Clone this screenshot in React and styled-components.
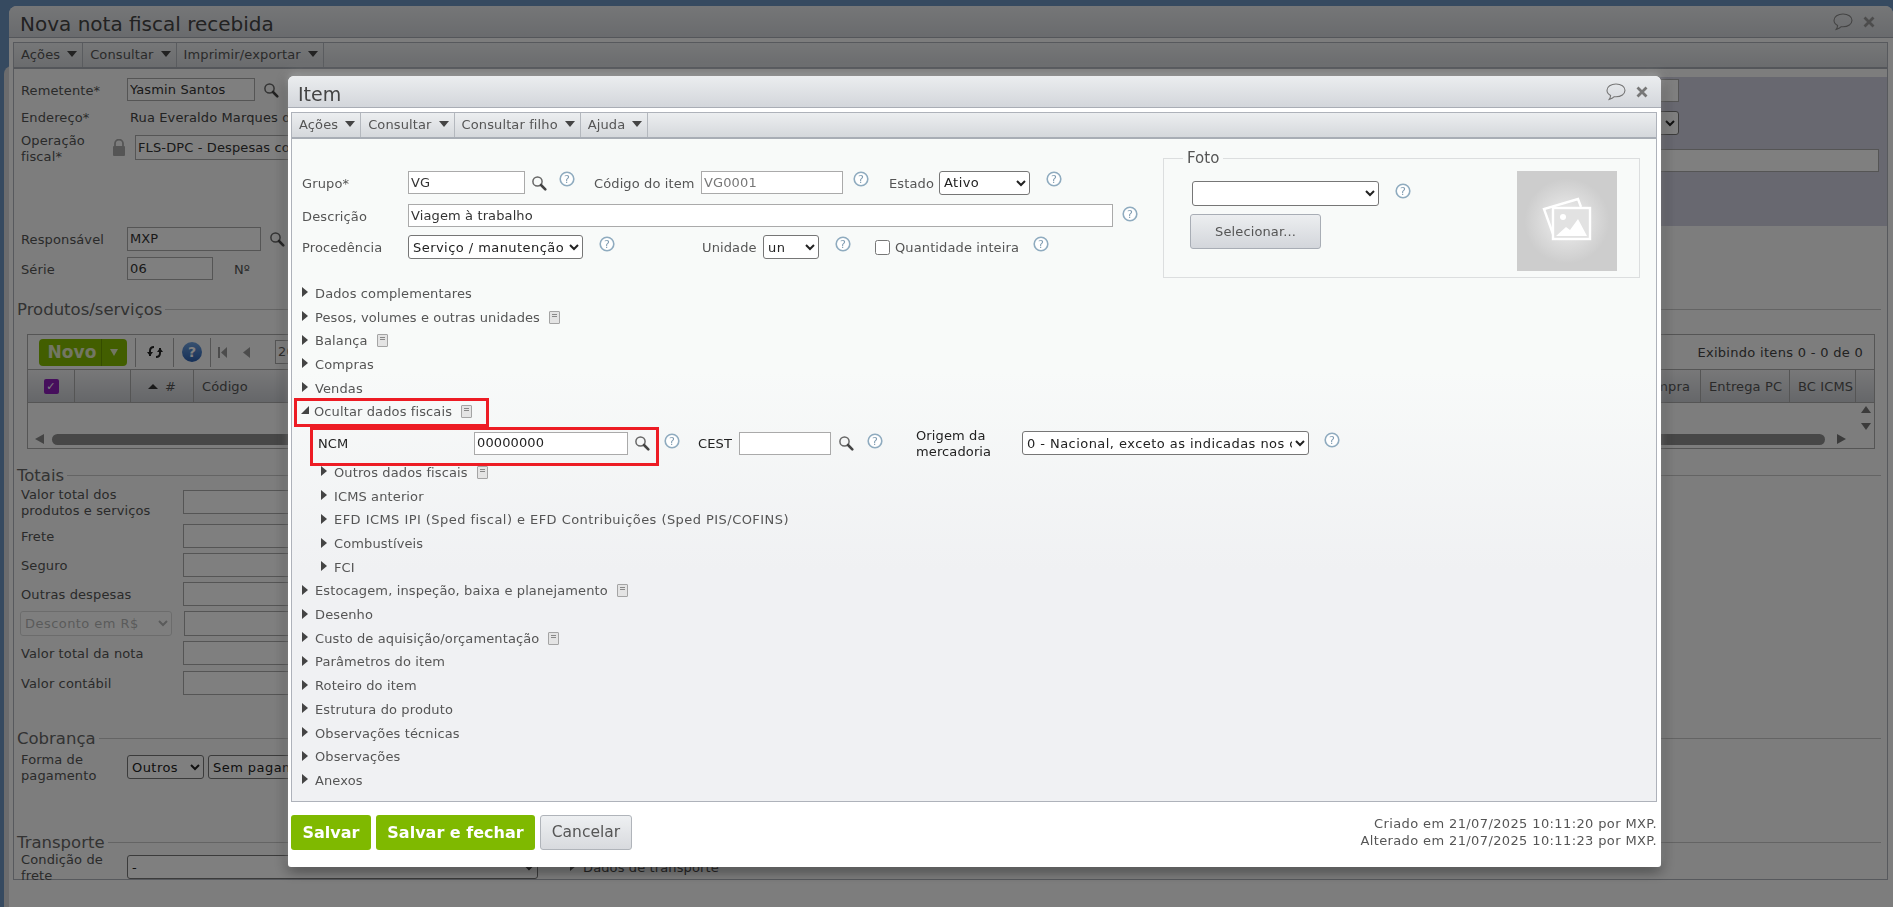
import React from 'react';
import styled, { createGlobalStyle } from 'styled-components';

const GlobalStyle = createGlobalStyle`
	html, body {
		margin: 0;
		height: 100%;
		overflow: hidden;
		background: #6c94c0;
		font-family: "DejaVu Sans", Verdana, sans-serif;
		font-size: 13px;
		letter-spacing: 0.12px;
		color: #444;
	}
	* {
		box-sizing: border-box;
	}
`;

// background window
const Win = styled.div`
	margin: 6px 0 0 9px;
	height: 901px;
	border-radius: 8px 8px 0 0;
	background: #fafbfb;
	box-shadow: -5px 60px 0 #d8d9da;
	overflow: hidden;
`;

const TitleBar = styled.div`
	height: 32px;
	display: flex;
	align-items: center;
	justify-content: space-between;
	padding: 0 ${(p) => p.$pr}px 0 ${(p) => p.$pl}px;
	background: linear-gradient(#ebedef, #d3d6db);
	border-bottom: 1px solid #a9adb5;
`;

const Title = styled.div`
	padding-top: 4px;
	font-size: ${(p) => p.$size}px;
	letter-spacing: 0;
	color: #444;
`;

const TitleIcons = styled.div`
	display: flex;
	align-items: center;
	gap: 10px;
`;

const Panel = styled.div`
	margin: 4px ${(p) => p.$mr}px 0 ${(p) => p.$ml}px;
	border: 1px solid #aeb2ba;
	background: #fafbfb;
`;

const Toolbar = styled.div`
	height: 26px;
	display: flex;
	background: linear-gradient(#eceef0, #d5d8dc);
	border-bottom: 2px solid #a8adb5;
`;

const MenuItem = styled.div`
	height: 100%;
	display: flex;
	align-items: center;
	gap: 7px;
	padding: 0 5px 0 7px;
	border-right: 1px solid #b4b8be;
	color: #555;
	line-height: 24px;
`;

const MenuCaret = styled.span`
	width: 0;
	height: 0;
	margin-top: -3px;
	border-left: 5px solid transparent;
	border-right: 5px solid transparent;
	border-top: 6px solid #444;
`;

const TopForm = styled.div`
	display: flex;
	align-items: flex-start;
`;

const LeftCol = styled.div`
	flex: 1;
	padding: 9px 0 0 7px;
`;

const TintCol = styled.div`
	width: 887px;
	height: 149px;
	margin-top: 8px;
	padding-top: 2px;
	background: #d0d0e0;
	display: flex;
	flex-direction: column;
	align-items: flex-end;
`;

const Row = styled.div`
	display: flex;
	align-items: center;
	height: ${(p) => p.$h || 23}px;
	margin-top: ${(p) => p.$mt || 0}px;
`;

const Label = styled.div`
	flex: none;
	width: ${(p) => p.$w}px;
	margin-left: ${(p) => p.$ml || 0}px;
	padding-top: 2px;
	line-height: 16px;
	color: ${(p) => p.$color || '#555'};
`;

const Input = styled.input`
	flex: none;
	width: ${(p) => p.$w}px;
	height: 100%;
	margin: 0 ${(p) => p.$mr || 0}px 0 ${(p) => p.$ml || 0}px;
	padding: 0 2px 1px;
	border: 1px solid #aaa;
	border-radius: 0;
	outline: none;
	background: ${(p) => p.$bg || '#fff'};
	font: 13px "DejaVu Sans", Verdana, sans-serif;
	letter-spacing: 0.12px;
	color: ${(p) => p.$color || '#333'};
`;

const Select = styled.select`
	flex: none;
	width: ${(p) => p.$w}px;
	height: ${(p) => p.$h || 24}px;
	margin: 0 ${(p) => p.$mr || 0}px 0 ${(p) => p.$ml || 0}px;
	background: #fff;
	border: 1px solid ${(p) => (p.disabled ? '#ccc' : '#767676')};
	border-radius: 3px;
	font: 13px "DejaVu Sans", Verdana, sans-serif;
	letter-spacing: 0.45px;
	color: ${(p) => (p.disabled ? '#999' : '#222')};
`;

const SectionHead = styled.div`
	display: flex;
	align-items: center;
	gap: 3px;
	height: 22px;
	margin: ${(p) => p.$mt}px 6px 0 3px;
	font-size: 16.5px;
	letter-spacing: 0;
	color: #666;
	&::after {
		content: '';
		flex: 1;
		height: 1px;
		background: #c8c8c8;
	}
`;

const Indent = styled.div`
	padding-left: 7px;
	margin-top: ${(p) => p.$mt || 0}px;
`;

const Grid = styled.div`
	height: 115px;
	margin: 14px 12px 0 13px;
	border: 1px solid #aaa;
	background: #fafbfb;
`;

const GridBar = styled.div`
	height: 35px;
	display: flex;
	align-items: center;
	padding-left: 11px;
	border-bottom: 1px solid #aaa;
`;

const NovoButton = styled.div`
	width: 88px;
	height: 27px;
	display: flex;
	border-radius: 4px;
	background: #84bd00;
	color: #e4ecc8;
	font-weight: bold;
	font-size: 17px;
`;

const NovoText = styled.div`
	width: 63px;
	padding-left: 4px;
	line-height: 27px;
	text-align: center;
	border-right: 1px solid #6b9a00;
`;

const NovoCaret = styled.span`
	width: 0;
	height: 0;
	margin: 10px 0 0 8px;
	border-left: 4px solid transparent;
	border-right: 4px solid transparent;
	border-top: 7px solid #e4ecc8;
`;

const BarSep = styled.span`
	width: 1px;
	height: 29px;
	margin: 0 ${(p) => p.$mr || 0}px 0 ${(p) => p.$ml || 0}px;
	background: #aaa;
`;

const PageBox = styled.div`
	width: 60px;
	height: 24px;
	margin-left: 25px;
	padding: 3px 2px;
	border: 1px solid #aaa;
	background: #fff;
	color: #555;
`;

const Showing = styled.div`
	margin-left: auto;
	padding-right: 11px;
	letter-spacing: 0.3px;
	color: #444;
`;

const GridHead = styled.div`
	height: 33px;
	display: flex;
	background: linear-gradient(#f0f0f2, #cbced3);
	border-bottom: 1px solid #aaa;
`;

const HeadCell = styled.div`
	display: flex;
	align-items: center;
	justify-content: ${(p) => (p.$center ? 'center' : 'flex-start')};
	flex: ${(p) => (p.$w ? 'none' : 1)};
	width: ${(p) => p.$w}px;
	padding-left: ${(p) => (p.$center ? 0 : 8)}px;
	border-right: ${(p) => (p.$flat ? 'none' : '1px solid #aaa')};
	color: #555;
	white-space: nowrap;
	overflow: hidden;
`;

const CheckBox = styled.span`
	width: 15px;
	height: 15px;
	border-radius: 2px;
	background: #8c1fb8;
	color: #fff;
	font-size: 11px;
	line-height: 15px;
	text-align: center;
	font-weight: bold;
`;

const SortCaret = styled.span`
	width: 0;
	height: 0;
	margin-right: 7px;
	border-left: 5px solid transparent;
	border-right: 5px solid transparent;
	border-bottom: 5px solid #333;
`;

const GridBody = styled.div`
	height: 45px;
	display: flex;
	align-items: flex-end;
	padding: 0 0 3px 7px;
`;

const ScrollThumb = styled.div`
	flex: 1;
	height: 11px;
	margin: 0 12px 0 8px;
	border-radius: 6px;
	background: #8e8e8e;
`;

const ScrollArrows = styled.div`
	width: 28px;
	height: 100%;
	display: flex;
	flex-direction: column;
	align-items: flex-end;
	justify-content: space-between;
	padding: 3px 3px 0 0;
`;

const Triangle = styled.span`
	width: 0;
	height: 0;
	margin: ${(p) => p.$m || 0};
	${(p) => (p.$dir === 'left' ? `border-top: 5px solid transparent; border-bottom: 5px solid transparent; border-right: 9px solid ${p.$c};` : '')}
	${(p) => (p.$dir === 'right' ? `border-top: 5px solid transparent; border-bottom: 5px solid transparent; border-left: 9px solid ${p.$c};` : '')}
	${(p) => (p.$dir === 'up' ? `border-left: 5px solid transparent; border-right: 5px solid transparent; border-bottom: 7px solid ${p.$c};` : '')}
	${(p) => (p.$dir === 'down' ? `border-left: 5px solid transparent; border-right: 5px solid transparent; border-top: 7px solid ${p.$c};` : '')}
`;

const Overlay = styled.div`
	position: fixed;
	inset: 0;
	background: rgba(0, 0, 0, 0.5);
`;

const Modal = styled.div`
	position: absolute;
	left: 288px;
	top: 76px;
	width: 1373px;
	height: 791px;
	background: #fff;
	border-radius: 6px 6px 3px 3px;
	box-shadow: 0 -3px 8px rgba(255, 255, 255, 0.35), 0 3px 14px rgba(0, 0, 0, 0.55);
	overflow: hidden;
	color: #555;
`;

const Body = styled.div`
	height: 662px;
	background: linear-gradient(#f8faf9 0%, #f8faf9 35%, #f0f1f3 65%);
`;

const ItemTop = styled.div`
	display: flex;
	align-items: flex-start;
`;

const ItemFields = styled.div`
	width: 871px;
	padding: 32px 0 0 10px;
`;

const ItemHelp = styled.span`
	flex: none;
	width: 16px;
	height: 16px;
	margin-left: ${(p) => p.$ml}px;
	align-self: flex-start;
	margin-top: ${(p) => p.$mt || 0}px;
	display: flex;
`;

const SearchWrap = styled.span`
	flex: none;
	display: flex;
	margin-left: ${(p) => p.$ml}px;
`;

const CheckInput = styled.input`
	flex: none;
	width: 15px;
	height: 15px;
	margin: 0 5px 0 ${(p) => p.$ml}px;
`;

const CheckLabel = styled(Label)`
	white-space: nowrap;
`;

const Fieldset = styled.fieldset`
	width: 477px;
	height: 126px;
	margin: 13px 0 0 0;
	padding: 0;
	border: 1px solid #dcdedf;
	display: flex;
`;

const Legend = styled.legend`
	margin-left: 19px;
	padding: 0 4px;
	font-size: 15px;
	letter-spacing: 0;
	line-height: 12px;
	color: #555;
`;

const FotoLeft = styled.div`
	padding: 17px 0 0 28px;
	flex: 1;
`;

const SelectButton = styled.div`
	width: 131px;
	height: 35px;
	margin: 8px 0 0 -2px;
	border: 1px solid #a8adb5;
	border-radius: 3px;
	background: linear-gradient(#eceef0, #d3d6db);
	text-align: center;
	line-height: 33px;
	color: #555;
`;

const PhotoBox = styled.div`
	width: 100px;
	height: 100px;
	margin: 7px 22px 0 0;
	background: radial-gradient(circle, #f0f0f0 0%, #cdcdcd 60%);
	display: flex;
	align-items: center;
	justify-content: center;
`;

const Accordion = styled.div`
	margin-top: 3.5px;
`;

const AccRow = styled.div`
	position: relative;
	display: flex;
	align-items: center;
	height: 23.7px;
	padding-left: ${(p) => p.$indent || 10}px;
	letter-spacing: ${(p) => p.$ls || 0.12}px;
	color: #555;
`;

const ClosedArrow = styled.span`
	flex: none;
	width: 0;
	height: 0;
	margin: -2px 7px 0 0;
	border-top: 5px solid transparent;
	border-bottom: 5px solid transparent;
	border-left: 6px solid #444;
`;

const OpenArrow = styled.span`
	flex: none;
	width: 0;
	height: 0;
	margin: -3px 5px 0 -1px;
	border-top: 4px solid transparent;
	border-bottom: 4px solid #444;
	border-left: 4px solid transparent;
	border-right: 4px solid #444;
`;

const DocIcon = styled.span`
	flex: none;
	width: 11px;
	height: 13px;
	margin-left: 9px;
	padding: 2px 2px;
	border: 1px solid #a4a4a4;
	border-radius: 1px;
	background: #e4e4e4;
	display: flex;
	flex-direction: column;
	gap: 1px;
	&::before,
	&::after {
		content: '';
		height: 1px;
		background: #888;
	}
`;

const NcmRow = styled.div`
	position: relative;
	display: flex;
	align-items: flex-start;
	height: 37px;
	padding: 8px 0 0 26px;
`;

const NcmField = styled.div`
	display: flex;
	align-items: center;
	height: 23px;
`;

const RedBox = styled.div`
	position: absolute;
	left: ${(p) => p.$l}px;
	top: ${(p) => p.$t}px;
	width: ${(p) => p.$w}px;
	height: ${(p) => p.$h}px;
	border: 3px solid #ed1c24;
	pointer-events: none;
`;

const Footer = styled.div`
	display: flex;
	align-items: flex-start;
	justify-content: space-between;
	padding: 13px 4px 0 3px;
`;

const Buttons = styled.div`
	display: flex;
	gap: 5px;
`;

const Btn = styled.div`
	width: ${(p) => p.$w}px;
	height: 35px;
	border-radius: 3px;
	text-align: center;
	line-height: 35px;
	letter-spacing: 0;
	${(p) =>
		p.$primary
			? 'background: #7fb900; color: #fff; font-weight: bold; font-size: 16px;'
			: 'background: linear-gradient(#eef0f2, #d8dade); color: #555; border: 1px solid #b0b4ba; line-height: 33px; font-size: 15.5px;'}
`;

const Stamp = styled.div`
	text-align: right;
	line-height: 16.5px;
	padding-top: 1px;
	letter-spacing: 0.38px;
	color: #555;
`;

const Search = () => (
	<svg width="16" height="16" viewBox="0 0 16 16">
		<circle cx="6.5" cy="6.5" r="4.6" fill="none" stroke="#666" strokeWidth="1.5" />
		<path d="M10 10l4.3 4.3" stroke="#444" strokeWidth="2.6" strokeLinecap="round" />
	</svg>
);

const Help = () => (
	<svg width="16" height="16" viewBox="0 0 16 16">
		<circle cx="8" cy="8" r="6.8" fill="#fff" stroke="#8fabbf" strokeWidth="1.6" />
		<text x="8" y="12" fontSize="11" textAnchor="middle" fill="#7f9bb0" fontFamily="DejaVu Sans">?</text>
	</svg>
);

const Bubble = ({ c }) => (
	<svg width="20" height="18" viewBox="0 0 20 18">
		<path d="M10 1C5 1 1 3.7 1 7.3c0 2.2 1.4 4 3.6 5.2-.1 1.4-.6 2.8-1.4 3.9 2 -.4 3.8-1.3 5.1-2.7.5.1 1.1.1 1.7.1 5 0 9-2.8 9-6.5S15 1 10 1z" fill="none" stroke={c} strokeWidth="1.1" />
	</svg>
);

const CloseX = ({ c }) => (
	<svg width="12" height="12" viewBox="0 0 12 12">
		<path d="M1.5 1.5l9 9M10.5 1.5l-9 9" stroke={c} strokeWidth="2.8" />
	</svg>
);

const Lock = () => (
	<svg width="14" height="17" viewBox="0 0 14 17" style={{ flex: 'none' }}>
		<path d="M3 7V4.6a4 4 0 0 1 8 0V7" fill="none" stroke="#aaa" strokeWidth="1.8" />
		<rect x="1" y="7" width="12" height="10" rx="1" fill="#aaa" />
	</svg>
);

const Refresh = () => (
	<svg width="17" height="14" viewBox="0 0 17 14">
		<path d="M3 11V6c0-2.5 1.5-4 4-4" fill="none" stroke="#222" strokeWidth="2" />
		<path d="M0 7l3 4 3-4z" fill="#222" />
		<path d="M13 3v5c0 2.5-1.5 4-4 4" fill="none" stroke="#222" strokeWidth="2" />
		<path d="M10 7l3-4 3 4z" fill="#222" />
	</svg>
);

const BlueHelp = () => (
	<svg width="20" height="20" viewBox="0 0 20 20">
		<defs>
			<linearGradient id="bh" x1="0" y1="0" x2="0" y2="1">
				<stop offset="0" stopColor="#6fa2e0" />
				<stop offset="1" stopColor="#2a5fb0" />
			</linearGradient>
		</defs>
		<circle cx="10" cy="10" r="10" fill="url(#bh)" />
		<text x="10" y="15" fontSize="14" fontWeight="bold" textAnchor="middle" fill="#fff" fontFamily="DejaVu Sans">?</text>
	</svg>
);

const PagerFirst = () => (
	<svg width="9" height="11" viewBox="0 0 9 11" style={{ marginLeft: 7 }}>
		<rect x="0" y="0" width="2" height="11" fill="#999" />
		<path d="M9 0v11L3 5.5z" fill="#999" />
	</svg>
);

const PagerPrev = () => (
	<svg width="7" height="11" viewBox="0 0 7 11" style={{ marginLeft: 16 }}>
		<path d="M7 0v11L0 5.5z" fill="#999" />
	</svg>
);

const PhotoIcon = () => (
	<svg width="52" height="48" viewBox="0 0 52 48">
		<path d="M12 37L3 12 37 2l3 8" fill="none" stroke="#fff" strokeWidth="2.4" />
		<rect x="12" y="11" width="37" height="31" fill="#e2e2e2" stroke="#fff" strokeWidth="2.4" />
		<circle cx="22" cy="20" r="3" fill="#fff" />
		<path d="M15 39l10-9 4 3 8-11 9 17z" fill="#fff" />
	</svg>
);

const Menu = ({ items }) => (
	<Toolbar>
		{items.map((t) => (
			<MenuItem key={t}>
				{t}
				<MenuCaret />
			</MenuItem>
		))}
	</Toolbar>
);

const Closed = ({ label, doc, indent, ls }) => (
	<AccRow $indent={indent} $ls={ls}>
		<ClosedArrow />
		{label}
		{doc && <DocIcon />}
	</AccRow>
);

const BackgroundWindow = () => (
	<Win>
		<TitleBar $pl={11} $pr={18}>
			<Title $size={20}>Nova nota fiscal recebida</Title>
			<TitleIcons>
				<Bubble c="#888" />
				<CloseX c="#999" />
			</TitleIcons>
		</TitleBar>
		<Panel $ml={4} $mr={5}>
			<Menu items={['Ações', 'Consultar', 'Imprimir/exportar']} />
			<TopForm>
				<LeftCol>
					<Row>
						<Label $w={106}>Remetente*</Label>
						<Input $w={128} defaultValue="Yasmin Santos" />
						<SearchWrap $ml={8}><Search /></SearchWrap>
					</Row>
					<Row $h={20} $mt={6}>
						<Label $w={109}>Endereço*</Label>
						Rua Everaldo Marques da Silva
					</Row>
					<Row $h={25} $mt={8}>
						<Label $w={91}>Operação fiscal*</Label>
						<Lock />
						<Input $w={600} $ml={9} defaultValue="FLS-DPC - Despesas com viagem" />
					</Row>
					<Row $h={24} $mt={67}>
						<Label $w={106}>Responsável</Label>
						<Input $w={134} defaultValue="MXP" />
						<SearchWrap $ml={8}><Search /></SearchWrap>
					</Row>
					<Row $mt={6}>
						<Label $w={106}>Série</Label>
						<Input $w={86} defaultValue="06" />
						<Label $w={30} $ml={21}>Nº</Label>
					</Row>
				</LeftCol>
				<TintCol>
					<Input as="div" $w={100} $mr={208} style={{ height: 23 }} $bg="#fff" />
					<Select $w={100} $mr={208} style={{ marginTop: 9 }} />
					<Input as="div" $w={800} $mr={8} style={{ height: 23, marginTop: 14 }} />
				</TintCol>
			</TopForm>

			<SectionHead $mt={18}>Produtos/serviços</SectionHead>
			<Grid>
				<GridBar>
					<NovoButton>
						<NovoText>Novo</NovoText>
						<NovoCaret />
					</NovoButton>
					<BarSep $ml={8} $mr={11} />
					<Refresh />
					<BarSep $ml={9} $mr={8} />
					<BlueHelp />
					<BarSep $ml={8} />
					<PagerFirst />
					<PagerPrev />
					<PageBox>20</PageBox>
					<Showing>Exibindo itens 0 - 0 de 0</Showing>
				</GridBar>
				<GridHead>
					<HeadCell $w={47} $center><CheckBox>✓</CheckBox></HeadCell>
					<HeadCell $w={56} />
					<HeadCell $w={63} $center><SortCaret />#</HeadCell>
					<HeadCell $w={200}>Código</HeadCell>
					<HeadCell />
					<HeadCell $w={100} style={{ justifyContent: 'flex-end', paddingRight: 10 }}>Compra</HeadCell>
					<HeadCell $w={89}>Entrega PC</HeadCell>
					<HeadCell $w={66}>BC ICMS</HeadCell>
					<HeadCell $w={18} $flat />
				</GridHead>
				<GridBody>
					<Triangle $dir="left" $c="#888" $m="0 0 1px 0" />
					<ScrollThumb />
					<Triangle $dir="right" $c="#777" $m="0 0 1px 0" />
					<ScrollArrows>
						<Triangle $dir="up" $c="#777" />
						<Triangle $dir="down" $c="#777" $m="0 0 15px 0" />
					</ScrollArrows>
				</GridBody>
			</Grid>

			<SectionHead $mt={15}>Totais</SectionHead>
			<Indent $mt={4}>
				<Row $h={24}>
					<Label $w={162}>Valor total dos<br />produtos e serviços</Label>
					<Input $w={300} />
				</Row>
				<Row $h={24} $mt={10}>
					<Label $w={162}>Frete</Label>
					<Input $w={300} />
				</Row>
				<Row $h={24} $mt={5}>
					<Label $w={162}>Seguro</Label>
					<Input $w={300} />
				</Row>
				<Row $h={24} $mt={5}>
					<Label $w={162}>Outras despesas</Label>
					<Input $w={300} />
				</Row>
				<Row $h={25} $mt={5}>
					<Select $w={152} $h={25} disabled defaultValue="r" style={{ marginLeft: -1 }}>
						<option value="r">Desconto em R$</option>
					</Select>
					<Input $w={300} $ml={12} />
				</Row>
				<Row $h={24} $mt={5}>
					<Label $w={162}>Valor total da nota</Label>
					<Input $w={300} />
				</Row>
				<Row $h={24} $mt={6}>
					<Label $w={162}>Valor contábil</Label>
					<Input $w={300} />
				</Row>
			</Indent>

			<SectionHead $mt={32}>Cobrança</SectionHead>
			<Indent $mt={6}>
				<Row $h={24}>
					<Label $w={106}>Forma de pagamento</Label>
					<Select $w={77} defaultValue="o"><option value="o">Outros</option></Select>
					<Select $w={200} $ml={4} defaultValue="s"><option value="s">Sem pagamento</option></Select>
				</Row>
			</Indent>

			<SectionHead $mt={52}>Transporte</SectionHead>
			<Indent $mt={2}>
				<Row $h={24}>
					<Label $w={106}>Condição de frete</Label>
					<Select $w={411} defaultValue="n"><option value="n">-</option></Select>
					<ClosedArrow style={{ marginLeft: 32, marginRight: 7 }} />
					Dados de transporte
				</Row>
			</Indent>
		</Panel>
	</Win>
);

const App = () => (
	<>
		<GlobalStyle />
		<BackgroundWindow />
		<Overlay>
			<Modal>
				<TitleBar $pl={10} $pr={13}>
					<Title $size={19}>Item</Title>
					<TitleIcons>
						<Bubble c="#777" />
						<CloseX c="#777" />
					</TitleIcons>
				</TitleBar>
				<Panel $ml={3} $mr={4}>
					<Menu items={['Ações', 'Consultar', 'Consultar filho', 'Ajuda']} />
					<Body>
						<ItemTop>
							<ItemFields>
								<Row>
									<Label $w={106}>Grupo*</Label>
									<Input $w={117} defaultValue="VG" />
									<SearchWrap $ml={6}><Search /></SearchWrap>
									<ItemHelp $ml={12}><Help /></ItemHelp>
									<Label $w={107} $ml={19}>Código do item</Label>
									<Input $w={142} $color="#777" defaultValue="VG0001" />
									<ItemHelp $ml={10}><Help /></ItemHelp>
									<Label $w={50} $ml={20}>Estado</Label>
									<Select $w={91} defaultValue="a"><option value="a">Ativo</option></Select>
									<ItemHelp $ml={16}><Help /></ItemHelp>
								</Row>
								<Row $mt={10}>
									<Label $w={106}>Descrição</Label>
									<Input $w={705} defaultValue="Viagem à trabalho" />
									<ItemHelp $ml={9} $mt={2}><Help /></ItemHelp>
								</Row>
								<Row $h={24} $mt={8}>
									<Label $w={106}>Procedência</Label>
									<Select $w={175} defaultValue="s"><option value="s">Serviço / manutenção</option></Select>
									<ItemHelp $ml={16} $mt={1}><Help /></ItemHelp>
									<Label $w={61} $ml={87}>Unidade</Label>
									<Select $w={56} defaultValue="un"><option value="un">un</option></Select>
									<ItemHelp $ml={16} $mt={1}><Help /></ItemHelp>
									<CheckInput type="checkbox" $ml={24} />
									<CheckLabel $w={123}>Quantidade inteira</CheckLabel>
									<ItemHelp $ml={15} $mt={1}><Help /></ItemHelp>
								</Row>
							</ItemFields>
							<Fieldset>
								<Legend>Foto</Legend>
								<FotoLeft>
									<Row $h={25}>
										<Select $w={187} $h={25} />
										<ItemHelp $ml={16} $mt={2}><Help /></ItemHelp>
									</Row>
									<SelectButton>Selecionar...</SelectButton>
								</FotoLeft>
								<PhotoBox><PhotoIcon /></PhotoBox>
							</Fieldset>
						</ItemTop>
						<Accordion>
							<Closed label="Dados complementares" />
							<Closed label="Pesos, volumes e outras unidades" doc />
							<Closed label="Balança" doc />
							<Closed label="Compras" />
							<Closed label="Vendas" />
							<AccRow>
								<OpenArrow />
								Ocultar dados fiscais
								<DocIcon />
								<RedBox $l={2} $t={-2} $w={195} $h={29} />
							</AccRow>
							<NcmRow>
								<NcmField>
									<Label $w={156} $color="#222">NCM</Label>
									<Input $w={154} $color="#222" defaultValue="00000000" />
									<SearchWrap $ml={6}><Search /></SearchWrap>
									<ItemHelp $ml={14} $mt={1}><Help /></ItemHelp>
									<Label $w={41} $ml={18} $color="#222">CEST</Label>
									<Input $w={92} />
									<SearchWrap $ml={7}><Search /></SearchWrap>
									<ItemHelp $ml={13} $mt={1}><Help /></ItemHelp>
									<Label $w={106} $ml={33} $color="#222">Origem da mercadoria</Label>
									<Select $w={287} defaultValue="0"><option value="0">0 - Nacional, exceto as indicadas nos códigos 3, 4, 5 e 8</option></Select>
									<ItemHelp $ml={15}><Help /></ItemHelp>
								</NcmField>
								<RedBox $l={18} $t={3} $w={349} $h={39} />
							</NcmRow>
							<Closed indent={29} label="Outros dados fiscais" doc />
							<Closed indent={29} label="ICMS anterior" />
							<Closed indent={29} ls={0.45} label="EFD ICMS IPI (Sped fiscal) e EFD Contribuições (Sped PIS/COFINS)" />
							<Closed indent={29} label="Combustíveis" />
							<Closed indent={29} label="FCI" />
							<Closed label="Estocagem, inspeção, baixa e planejamento" doc />
							<Closed label="Desenho" />
							<Closed label="Custo de aquisição/orçamentação" doc />
							<Closed label="Parâmetros do item" />
							<Closed label="Roteiro do item" />
							<Closed label="Estrutura do produto" />
							<Closed label="Observações técnicas" />
							<Closed label="Observações" />
							<Closed label="Anexos" />
						</Accordion>
					</Body>
				</Panel>
				<Footer>
					<Buttons>
						<Btn $primary $w={80}>Salvar</Btn>
						<Btn $primary $w={159}>Salvar e fechar</Btn>
						<Btn $w={92}>Cancelar</Btn>
					</Buttons>
					<Stamp>
						Criado em 21/07/2025 10:11:20 por MXP.
						<br />
						Alterado em 21/07/2025 10:11:23 por MXP.
					</Stamp>
				</Footer>
			</Modal>
		</Overlay>
	</>
);

export default App;
